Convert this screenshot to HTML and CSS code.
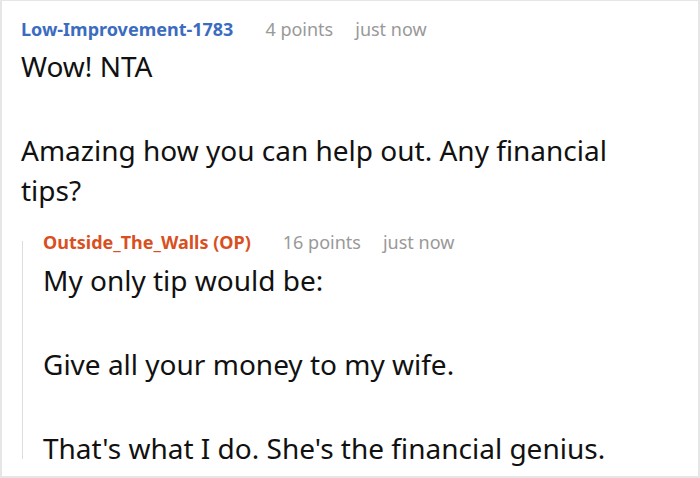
FILE: index.html
```html
<!DOCTYPE html>
<html>
<head>
<meta charset="utf-8">
<link rel="stylesheet" href="styles.css">
</head>
<body>
<div class="comment">
  <div class="meta">
    <span class="user user-blue">Low-Improvement-1783</span>
    <span class="points">4 points</span>
    <span class="time">just now</span>
  </div>
  <div class="body">
    <p>Wow! NTA</p>
    <p>Amazing how you can help out. Any financial tips?</p>
  </div>
  <div class="reply">
    <div class="thread-line"></div>
    <div class="reply-content">
      <div class="meta meta-reply">
        <span class="user user-op">Outside_The_Walls (OP)</span>
        <span class="points">16 points</span>
        <span class="time">just now</span>
      </div>
      <div class="body">
        <p>My only tip would be:</p>
        <p>Give all your money to my wife.</p>
        <p>That's what I do. She's the financial genius.</p>
      </div>
    </div>
  </div>
</div>
</body>
</html>
```

FILE: styles.css
```css
html, body {
  margin: 0;
  padding: 0;
  background: #ffffff;
}

body {
  font-family: "Noto Sans", "Open Sans", sans-serif;
  color: #111111;
}

.comment {
  box-sizing: border-box;
  width: 700px;
  height: 478px;
  overflow: hidden;
  border: 2px solid #e6e6e6;
  border-top-width: 1px;
  padding: 16px 40px 0 19px;
}

.meta {
  display: flex;
  align-items: baseline;
  font-size: 18px;
  line-height: 24px;
  margin-bottom: 5px;
  white-space: nowrap;
}

.meta-reply {
  margin-bottom: 6px;
}

.user {
  font-weight: 700;
  margin-right: 32px;
}

.user-blue {
  color: #3b6cbf;
}

.user-op {
  color: #d9501f;
}

.points {
  color: #999999;
  margin-right: 22px;
}

.time {
  color: #999999;
}

.body {
  font-size: 28px;
  line-height: 40px;
}

.body p {
  margin: 0 0 44px 0;
}

.body p:last-child {
  margin-bottom: 0;
}

.reply {
  display: flex;
  margin-top: 20px;
  margin-left: 1px;
}

.thread-line {
  width: 1px;
  background: #dddddd;
  margin-top: 11px;
  margin-bottom: 9px;
  flex: none;
}

.reply-content {
  padding-left: 20px;
}
```
